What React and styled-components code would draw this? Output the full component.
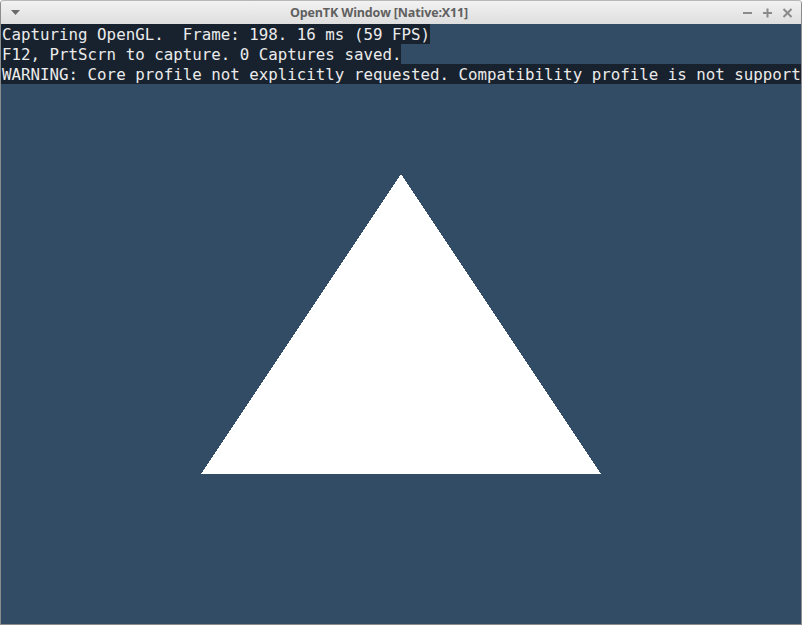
import React from "react";
import styled, { createGlobalStyle } from "styled-components";

const Global = createGlobalStyle`
  html, body { margin: 0; padding: 0; background: #ffffff; }
  body { width: 802px; height: 625px; overflow: hidden; }
`;

const Window = styled.div`
  width: 802px;
  height: 625px;
  display: flex;
  flex-direction: column;
  box-sizing: border-box;
  border: 1px solid #8c8c8c;
  border-top: none;
  border-radius: 4px 4px 0 0;
  overflow: hidden;
  background: #d8d8d8;
`;

const TitleBar = styled.div`
  height: 24px;
  flex: none;
  display: grid;
  grid-template-columns: 40px 1fr 80px;
  align-items: center;
  background: linear-gradient(#f2f2f2, #dedede);
  margin: 0 -1px;
  border-top: 1px solid #b8b8b8;
  box-sizing: border-box;
  border-radius: 4px 4px 0 0;
`;

const Title = styled.div`
  text-align: center;
  font-family: "Open Sans", "Noto Sans", sans-serif;
  font-weight: 700;
  font-size: 12.5px;
  color: #606060;
  letter-spacing: -0.15px;
  padding-right: 4px;
`;

const MenuArrow = styled.div`
  padding-left: 11px;
  display: flex;
  align-items: center;
`;

const Controls = styled.div`
  display: flex;
  align-items: center;
  justify-content: flex-end;
  gap: 9px;
  padding-right: 9px;
`;

const Viewport = styled.div`
  position: relative;
  width: 800px;
  height: 600px;
  background: #334c66;
  overflow: hidden;
`;

const Overlay = styled.div`
  position: absolute;
  top: 0;
  left: 0;
  right: 0;
  display: flex;
  flex-direction: column;
  align-items: flex-start;
  z-index: 1;
`;

const Line = styled.div`
  background: #18222e;
  color: #ebebeb;
  font-family: "DejaVu Sans Mono", "Liberation Mono", monospace;
  font-size: 15.8px;
  line-height: 21px;
  height: 20px;
  white-space: pre;
  padding: 0 0 0 1px;
`;

const Canvas = styled.svg`
  position: absolute;
  inset: 0;
  width: 800px;
  height: 600px;
`;

export default function App() {
  return (
    <>
      <Global />
      <Window>
        <TitleBar>
          <MenuArrow>
            <svg width="9" height="5" viewBox="0 0 9 5">
              <polygon points="0,0 9,0 4.5,5" fill="#6a6a6a" />
            </svg>
          </MenuArrow>
          <Title>OpenTK Window [Native:X11]</Title>
          <Controls>
            <svg width="11" height="11" viewBox="0 0 11 11">
              <rect x="1" y="5" width="9" height="2" fill="#8a8a8a" />
            </svg>
            <svg width="11" height="11" viewBox="0 0 11 11">
              <rect x="1" y="5" width="9" height="2" fill="#8a8a8a" />
              <rect x="4.5" y="1.5" width="2" height="9" fill="#8a8a8a" />
            </svg>
            <svg width="11" height="11" viewBox="0 0 11 11">
              <path d="M1.5 2 L9.5 10 M9.5 2 L1.5 10" stroke="#8a8a8a" strokeWidth="2" />
            </svg>
          </Controls>
        </TitleBar>
        <Viewport>
          <Overlay>
            <Line>Capturing OpenGL.  Frame: 198. 16 ms (59 FPS)</Line>
            <Line>F12, PrtScrn to capture. 0 Captures saved.</Line>
            <Line>WARNING: Core profile not explicitly requested. Compatibility profile is not support</Line>
          </Overlay>
          <Canvas viewBox="0 0 800 600" shapeRendering="crispEdges">
            <polygon points="200,450 600,450 400,150" fill="#ffffff" />
          </Canvas>
        </Viewport>
      </Window>
    </>
  );
}
